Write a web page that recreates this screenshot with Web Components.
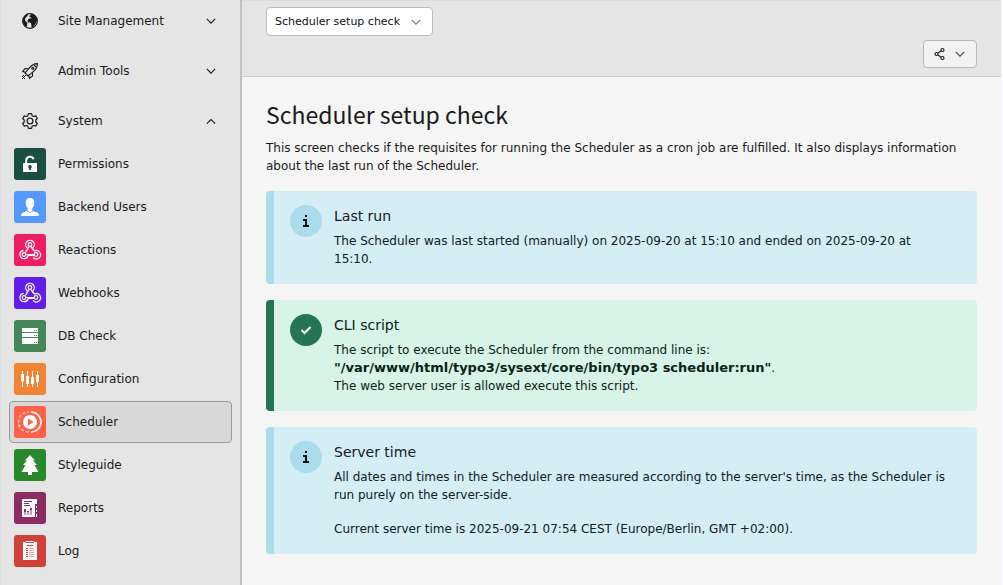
<!DOCTYPE html>
<html lang="en">
<head>
<meta charset="utf-8">
<title>Scheduler setup check</title>
<style>
html, body { margin: 0; min-height: 100vh; }
body {
  box-sizing: border-box;
  padding: 0 2px 1px 0;
  background: #f9f9fe;
  color: #1a1a1a;
  font: 12px/18px "DejaVu Sans", Verdana, sans-serif;
  display: flex;
}
backend-shell { flex: 1; }
</style>
</head>
<body>
<backend-shell>
  <module-menu slot="menu">
    <module-group icon="globe" label="Site Management"></module-group>
    <module-group icon="rocket" label="Admin Tools"></module-group>
    <module-group icon="gear" label="System" open>
      <module-item icon="permissions" color="#194f43" label="Permissions"></module-item>
      <module-item icon="user" color="#5599ff" label="Backend Users"></module-item>
      <module-item icon="hook" color="#ed1e64" label="Reactions"></module-item>
      <module-item icon="hook" color="#621ee8" label="Webhooks"></module-item>
      <module-item icon="db" color="#448858" label="DB Check"></module-item>
      <module-item icon="config" color="#f18433" label="Configuration"></module-item>
      <module-item icon="scheduler" color="#ff6048" label="Scheduler" active></module-item>
      <module-item icon="tree" color="#28892c" label="Styleguide"></module-item>
      <module-item icon="reports" color="#8b2d62" label="Reports"></module-item>
      <module-item icon="log" color="#d04139" label="Log"></module-item>
    </module-group>
  </module-menu>
  <doc-header></doc-header>
  <module-body heading="Scheduler setup check">
    <p slot="lead" style="margin:0">This screen checks if the requisites for running the Scheduler as a cron job are fulfilled. It also displays information about the last run of the Scheduler.</p>
    <call-out kind="info" heading="Last run">The Scheduler was last started (manually) on 2025-09-20 at 15:10 and ended on 2025-09-20 at 15:10.</call-out>
    <call-out kind="success" heading="CLI script">The script to execute the Scheduler from the command line is:<br><strong>"/var/www/html/typo3/sysext/core/bin/typo3 scheduler:run"</strong>.<br>The web server user is allowed execute this script.</call-out>
    <call-out kind="info" heading="Server time"><p>All dates and times in the Scheduler are measured according to the server's time, as the Scheduler is run purely on the server-side.</p><p>Current server time is 2025-09-21 07:54 CEST (Europe/Berlin, GMT +02:00).</p></call-out>
  </module-body>
</backend-shell>

<script>
const svg = (size, inner) =>
  `<svg width="${size}" height="${size}" viewBox="0 0 ${size} ${size}" aria-hidden="true">${inner}</svg>`;
const chevronDown = svg(16, '<path d="M3.800 5.900 8 10.100l4.200-4.200" fill="none" stroke="currentColor" stroke-width="1.100"/>');
const chevronUp = svg(16, '<path d="M3.800 10.700 8 6.500l4.200 4.200" fill="none" stroke="currentColor" stroke-width="1.100"/>');

const icons = {
  globe: svg(16, '<circle cx="8" cy="8" r="7.300" fill="none" stroke="currentColor" stroke-width="1.200"/><path fill="currentColor" d="M7 3.500 9.500 1l3 1 2.500 2.500.5 3-1.500 1.700-.3 1.500-2.500 3.500-1.700.3-.2-3.500-1-1.500H6.200L5.500 7.800l1-1.800 2-.7 1 .2-.5-1zM1 5.500 3.500 2.200 6 1.200 5.500 3 3.700 4.500 3 6.500l.3 1.500L5.500 9.800l-.3 2L4.500 14 2 12 .8 9z"/>'),
  rocket: svg(16, '<g fill="none" stroke="currentColor" stroke-width="1.100"><path d="M15.400.6C11.500.6 8.800 2.500 6.500 6L3 10l3 3 4-3.300C13.500 7.500 15.400 4.500 15.400.6z"/><path d="M6.700 5.700 3 5.500l-2.300 3 3 .8M10.500 9.500v3.500l-3 2.300-.8-2.800"/><path d="m12 2 2 2"/><circle cx="10.800" cy="5.200" r="1"/></g><path fill="currentColor" d="M0 13h1v1H0zM2 13h1v1H2zM1 12h1v1H1zM1 14h1v1H1zM0 15h1v1H0zM2 15h1v1H2zM3 12h1v1H3z"/>'),
  gear: svg(16, '<g fill="none" stroke="currentColor" stroke-width="1.200"><path stroke-linejoin="round" d="M6.400.7h3.200l.5 2 1.500.8 2.100-.6 1.600 2.600-1.500 1.500v2l1.500 1.500-1.600 2.600-2.100-.6-1.500.8-.5 2H6.400l-.5-2-1.500-.8-2.100.6L.7 10.500 2.200 9V7L.7 5.500l1.600-2.600 2.100.6 1.500-.8z"/><circle cx="8" cy="8" r="2.900"/></g>'),
  permissions: svg(32, '<path fill="none" stroke="#fff" stroke-width="2" d="M12.200 15v-2.500a3.800 3.800 0 0 1 7.400-1.200"/><path fill="#fff" fill-rule="evenodd" d="M9 15h14v9H9zm7 2a1.800 1.800 0 0 0-1.100 3.200l.3 1.800h1.600l.3-1.800A1.800 1.800 0 0 0 16 17z"/>'),
  user: svg(32, '<path fill="#fff" d="M16 7c3 0 4.500 1.700 4.300 5-.1 2.800-1 4.300-2 5.300v1.500c0 1 1 1.500 2.500 2 2.700.8 4.200 1.400 4.200 4.200H7c0-2.800 1.500-3.400 4.200-4.200 1.500-.5 2.500-1 2.500-2v-1.500c-1-1-1.900-2.500-2-5.300C11.500 8.700 13 7 16 7z"/><path d="m13 20 3 1.500 3-1.500" fill="none" stroke="#5599ff" stroke-width=".8"/>'),
  hook: svg(32, '<g fill="none" stroke="#fff" stroke-width="1.200"><circle cx="16" cy="10.500" r="1.800"/><circle cx="10" cy="20.500" r="1.800"/><circle cx="22" cy="20.500" r="1.800"/><path d="M12.800 13.500a4.300 4.300 0 1 1 6.400 0l-.5 1 1.600 2.500a4.200 4.200 0 1 1-1.300 6.300M16.800 12.200l2.200 3.800M12.800 13.500l.8 1-2 3.800M15.200 12.200l-2.800 5M9.500 16.300a4.200 4.200 0 1 0 4.700 5.200h5.800M11.800 20.500h8.400"/></g>'),
  db: svg(32, '<path fill="#fff" d="M8 8h16v4H8zM8 13h16v4H8zM8 18h16v6H8z"/><path fill="#448858" d="M20 10h1v1h-1zM22 10h1v1h-1zM20 15h1v1h-1zM22 15h1v1h-1zM20 22h1v1h-1zM22 22h1v1h-1z"/>'),
  config: svg(32, '<path fill="#fff" d="M8 8h1v16H8zM13 8h1v16h-1zM18 8h1v16h-1zM23 8h1v16h-1zM7 11h3v7H7zM12 13h3v8h-3zM17 14h3v7h-3zM22 12h3v7h-3z"/>'),
  scheduler: svg(32, '<circle cx="16" cy="16" r="7" fill="#fff"/><path fill="#ff6048" d="m14 12.500 5.500 3.500-5.500 3.500z"/><path fill="none" stroke="#fff" stroke-width="1.500" d="M17 6a10 10 0 0 1 0 20"/><path fill="none" stroke="#fff" stroke-opacity=".6" stroke-width="1.800" stroke-dasharray="3 2" d="M14.500 26a10 10 0 0 1 0-20"/>'),
  tree: svg(32, '<path fill="#fff" d="m16 6 5 5.500h-2l4 4.500h-2.500l4 7H18v3h-4v-3H7.500l4-7H9l4-4.500h-2z"/>'),
  reports: svg(32, '<path fill="#fff" d="M8 7h15v5h-2v13H8z"/><path fill="#8b2d62" d="M10 9h8v1h-8zM10 11h5v1h-5zM10 13h6v1h-6zM10 17h2v3h-2zM13 19h2v1h-2zM16 16h2v2h-2z"/><path fill="#cb9ab4" d="M10 20h2v3h-2zM13 20h2v3h-2zM16 18h2v5h-2z"/><path fill="#fff" d="M22 14h1v2h-1zM22 18h1v2h-1zM22 22h1v3h-1z"/>'),
  log: svg(32, '<path fill="#fff" d="M9 7h3V6h8v1h3v18H9z"/><path fill="#d04139" d="M13 10h6v1h-6zM12 7h8v1h-8zM12 13h2v1h-2zM12 15h2v1h-2zM12 17h2v1h-2zM12 19h2v1h-2zM12 21h2v1h-2z"/><path fill="#e9a39e" d="M15 13h5v1h-5zM15 15h5v1h-5zM15 17h5v1h-5zM15 19h5v1h-5zM15 21h5v1h-5z"/>'),
  share: svg(16, '<g fill="none" stroke="#222" stroke-width="1.200"><circle cx="4.500" cy="8" r="1.500"/><circle cx="10.500" cy="4" r="1.500"/><circle cx="10.500" cy="12" r="1.500"/><path d="m6 7 3.200-2.200M6 9l3.200 2.200"/></g>'),
  info: svg(32, '<path fill="#111" d="M15 10h2v2h-2zM13 14h4v6h2v2h-6v-2h2v-4h-2z"/>'),
  success: svg(32, '<path fill="none" stroke="#fff" stroke-width="2" d="m11.500 16 3 3 6-6"/>')
};

const define = (name, render) => customElements.define(name, class extends HTMLElement {
  constructor() {
    super();
    this.attachShadow({ mode: 'open' });
  }
  connectedCallback() {
    this.shadowRoot.innerHTML = render(this);
  }
});

define('backend-shell', () => `
  <style>
    :host { display: grid; grid-template-columns: 242px minmax(0, 1fr); }
    .main { background: #f5f5f5; }
  </style>
  <slot name="menu"></slot>
  <main class="main"><slot></slot></main>`);

define('module-menu', () => `
  <style>
    :host { display: block; box-sizing: border-box; background: #e5e5e5;
      border-left: 1px solid #dddde6; border-right: 2px solid #c2c2c2; padding: 0 8px; }
    nav { display: flex; flex-direction: column; gap: 8px; }
  </style>
  <nav aria-label="Modules"><slot></slot></nav>`);

define('module-group', el => `
  <style>
    :host { display: flex; flex-direction: column; gap: 1px; }
    button { display: flex; align-items: center; gap: 12px; height: 42px; width: 100%;
      padding: 0 13px 0 5px; border: 0; background: none; font: inherit; color: inherit; text-align: left; }
    .icon { display: flex; width: 32px; justify-content: center; }
    .label { flex: 1; }
    svg { display: block; }
  </style>
  <button type="button" aria-expanded="${el.hasAttribute('open')}">
    <span class="icon">${icons[el.getAttribute('icon')]}</span>
    <span class="label">${el.getAttribute('label')}</span>
    ${el.hasAttribute('open') ? chevronUp : chevronDown}
  </button>
  <slot></slot>`);

define('module-item', el => `
  <style>
    :host { display: block; }
    a { display: flex; align-items: center; gap: 12px; height: 42px; box-sizing: border-box;
      padding: 0 4px; border: 1px solid transparent; border-radius: 4px; color: inherit; text-decoration: none; }
    :host([active]) a { background: #d8d8d8; border-color: #999; }
    .icon { border-radius: 3px; background: ${el.getAttribute('color')}; }
    svg { display: block; }
  </style>
  <a href="#" ${el.hasAttribute('active') ? 'aria-current="page"' : ''}>
    <span class="icon">${icons[el.getAttribute('icon')]}</span>
    <span>${el.getAttribute('label')}</span>
  </a>`);

define('doc-header', () => `
  <style>
    :host { display: flex; flex-direction: column; gap: 4px; padding: 6px 24px 8px;
      background: #e5e5e5; border-top: 1px solid #dcdcdc; border-bottom: 1px solid #cfcfcf; }
    .pick { display: grid; width: fit-content; align-items: center; }
    .pick > * { grid-area: 1 / 1; }
    .pick svg { justify-self: end; margin-right: 9px; color: #777; pointer-events: none; }
    select { appearance: none; height: 29px; padding: 0 31px 0 8px; margin: 0; border: 1px solid #bbb;
      border-radius: 4px; background: #fff; color: #111; font: 11px/18px "DejaVu Sans", Verdana, sans-serif; }
    button { align-self: flex-end; display: flex; align-items: center; justify-content: center; gap: 4px;
      width: 54px; height: 28px; padding: 0; border: 1px solid #bbb; border-radius: 4px; background: #f2f2f2; color: #444; }
    svg { display: block; }
  </style>
  <div class="pick">
    <select aria-label="Scheduler view"><option>Scheduler setup check</option></select>
    ${chevronDown}
  </div>
  <button type="button" aria-label="Share">${icons.share}${chevronDown}</button>`);

define('module-body', el => `
  <style>
    :host { display: flex; flex-direction: column; gap: 16px; padding: 24px 24px 31px; }
    h1 { margin: 0 0 12px; font: 400 23px/26px "Noto Sans CJK SC", "Source Sans 3", sans-serif; }
  </style>
  <header><h1>${el.getAttribute('heading')}</h1><slot name="lead"></slot></header>
  <slot></slot>`);

define('call-out', el => `
  <style>
    :host { display: flex; gap: 12px; padding: 14px 28px 16px 16px; border-left: 8px solid #abdcec;
      border-radius: 4px; background: #d5edf5; color: #0d2026; }
    :host([kind="success"]) { border-color: #257554; background: #d8f3e7; color: #0a2218; }
    .icon { flex: none; align-self: flex-start; border-radius: 50%; background: #abdcec; }
    :host([kind="success"]) .icon { background: #257554; }
    svg { display: block; }
    .text { flex: 1; padding-top: 1px; }
    h2 { margin: 0 0 6px; font: 400 14px/20px "DejaVu Sans", Verdana, sans-serif; }
    ::slotted(p) { margin: 0; }
    ::slotted(p:not(:first-child)) { margin-top: 16px; }
    ::slotted(strong) { font-size: 13px; line-height: 16px; }
  </style>
  <span class="icon">${icons[el.getAttribute('kind')]}</span>
  <div class="text"><h2>${el.getAttribute('heading')}</h2><slot></slot></div>`);
</script>
</body>
</html>
